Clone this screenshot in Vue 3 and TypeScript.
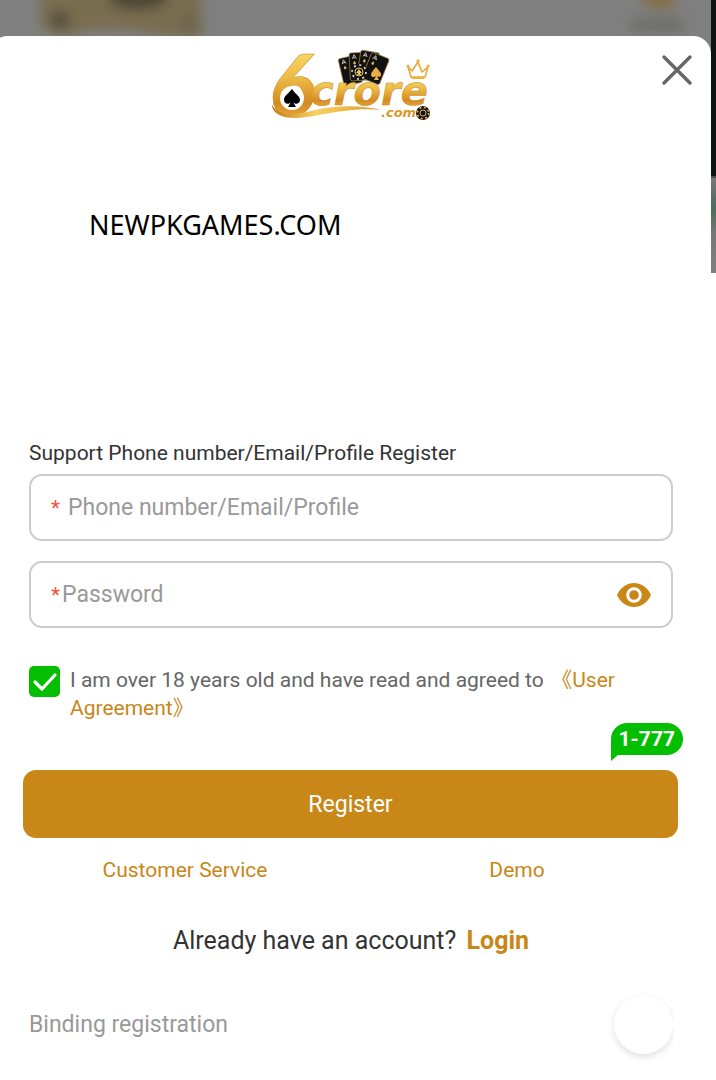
<script setup lang="ts">
import { ref } from 'vue'

const account = ref('')
const password = ref('')
const showPassword = ref(false)
const agreed = ref(true)
const cards = [
  { x: 69, y: 14, tilt: -13 },
  { x: 80, y: 8, tilt: -3 },
  { x: 92, y: 5, tilt: 9 },
  { x: 103, y: 7, tilt: 22 },
]
</script>

<template>
  <div class="page">
    <div class="backdrop" aria-hidden="true">
      <svg class="backdrop-art" width="260" height="36" viewBox="0 0 260 36">
        <defs>
          <filter id="soft" x="-30%" y="-60%" width="160%" height="220%"><feGaussianBlur stdDeviation="6" /></filter>
        </defs>
        <g filter="url(#soft)">
          <path d="M40 -10H202V38H172L130 30 90 30 60 38 40 26Z" fill="#796d50" />
          <circle cx="60" cy="20" r="10" fill="#565040" />
          <ellipse cx="138" cy="-2" rx="30" ry="12" fill="#4e4634" />
          <circle cx="190" cy="24" r="10" fill="#6d654f" />
        </g>
      </svg>
      <svg class="backdrop-art" width="110" height="36" viewBox="0 0 110 36">
        <g filter="url(#soft)">
          <ellipse cx="58" cy="0" rx="18" ry="10" fill="#84704a" />
          <rect x="28" y="18" width="56" height="14" rx="7" fill="#6d6d6b" />
        </g>
      </svg>
      <div class="edge"></div>
    </div>

    <main class="sheet">
      <header class="top">
        <svg class="logo" width="164" height="80" viewBox="0 0 164 80" role="img" aria-label="6crore.com">
          <defs>
            <linearGradient id="gold" x1="0" y1="0" x2="0" y2="1">
              <stop offset="0" stop-color="#ffed80" />
              <stop offset="0.45" stop-color="#edbb45" />
              <stop offset="0.7" stop-color="#d38b20" />
              <stop offset="1" stop-color="#f7c65a" />
            </linearGradient>
            <linearGradient id="tail" x1="0" y1="0" x2="1" y2="0">
              <stop offset="0" stop-color="#c87a18" />
              <stop offset="0.4" stop-color="#f7d264" />
              <stop offset="1" stop-color="#dc9b2b" />
            </linearGradient>
          </defs>
          <g v-for="card in cards" :key="card.x" :transform="`translate(${card.x} ${card.y}) rotate(${card.tilt})`">
            <rect width="19" height="28" rx="2" fill="#111" stroke="#aa8950" stroke-width="0.7" />
            <path d="M3 6 5 2 7 6M4 5H6" fill="none" stroke="#e8e2d0" stroke-width="0.8" />
            <path d="m5 8 1.5 2.5L5 12 3.500 10.500Z" fill="#e9b755" />
          </g>
          <path d="M107 22C104 26 102 27 102 30 102 32 105 33 107 31L105 35H110L108 31C110 33 113 31 112 29 112 27 109 25 107 22Z" fill="#edae45" />
          <g fill="url(#gold)" stroke="#c98722" stroke-width="0.5">
            <text x="0" y="71" class="six">6</text>
            <text x="41" y="60" class="crore">crore</text>
          </g>
          <path d="M3 60C10 72 28 70 46 65 70 60 92 60 112 65 92 63 72 66 50 70 30 74 8 76 3 62Z" fill="url(#tail)" />
          <circle cx="23" cy="53" r="12" fill="#fff" />
          <path d="M23 44C18 50 15 51 15 55 15 59 20 60 22 57L19 62H27L24 57C26 60 31 59 31 55 31 51 27 50 23 44Z" fill="#000" />
          <g>
            <circle cx="90" cy="27" r="8" fill="#151515" />
            <circle cx="90" cy="27" r="7" fill="none" stroke="#f0ead8" stroke-width="1.600" stroke-dasharray="2 3.5" />
            <circle cx="90" cy="27" r="4" fill="#111" stroke="#efc569" />
            <path d="M90 24 93 28H91L92 30H88L89 28H87Z" fill="#efc569" />
          </g>
          <g fill="#f0b13f">
            <path d="m139 22 4 4 6-9 4 10 6-5-3 10H142Z" fill="none" stroke="#e9a936" stroke-width="1.600" />
            <circle cx="139" cy="21" r="1.5" /><circle cx="149" cy="16" r="1.700" /><circle cx="159" cy="21" r="1.5" />
            <path d="M142 32H156L155 34H143Z" />
          </g>
          <text x="112" y="72" class="domain">.com</text>
          <circle cx="154" cy="68" r="7" fill="#17130d" />
          <circle cx="154" cy="68" r="5.700" fill="none" stroke="#e5a93b" stroke-width="1.800" stroke-dasharray="2 2.5" />
          <circle cx="154" cy="68" r="3" fill="#111" stroke="#ffe09a" stroke-width="0.8" />
        </svg>
        <button class="close" type="button" aria-label="Close">
          <svg width="32" height="32" viewBox="0 0 32 32"><path d="M3 3 29 29M29 3 3 29" stroke="#666" stroke-width="3.400" stroke-linecap="round" /></svg>
        </button>
      </header>

      <p class="site">NEWPKGAMES.COM</p>

      <form class="form" @submit.prevent>
        <label class="hint" for="account">Support Phone number/Email/Profile Register</label>
        <div class="field spaced">
          <span class="star" aria-hidden="true">*</span>
          <input id="account" v-model="account" type="text" placeholder="Phone number/Email/Profile" />
        </div>
        <div class="field">
          <span class="star" aria-hidden="true">*</span>
          <input v-model="password" :type="showPassword ? 'text' : 'password'" placeholder="Password" aria-label="Password" />
          <button class="eye" type="button" aria-label="Show password" @click="showPassword = !showPassword">
            <svg width="34" height="24" viewBox="0 0 34 24">
              <path d="M0 12C7-4 27-4 34 12 27 28 7 28 0 12Z" fill="#c88717" />
              <circle cx="17" cy="12" r="6.3" fill="#c88717" stroke="#fff" stroke-width="3" />
            </svg>
          </button>
        </div>

        <div class="agree">
          <input id="agree" v-model="agreed" type="checkbox" />
          <svg class="tick" width="31" height="31" viewBox="0 0 31 31" aria-hidden="true">
            <path v-if="agreed" d="M6 16 13 23 26 9" fill="none" stroke="#fff" stroke-width="3.2" stroke-linecap="round" stroke-linejoin="round" />
          </svg>
          <div class="terms">
            <label for="agree">I am over 18 years old and have read and agreed to</label>&nbsp;
            <a href="#agreement"><span class="bracket open">《</span>User Agreement<span class="bracket">》</span></a>
          </div>
        </div>

        <div class="submit">
          <span class="badge">1-777<svg class="point" width="10" height="20" viewBox="0 0 10 20" aria-hidden="true"><path d="M0 0V20L8 13H10Z" fill="#04be02" /></svg></span>
          <button class="register" type="submit">Register</button>
        </div>
      </form>

      <nav class="links">
        <a href="#service">Customer Service</a>
        <a href="#demo">Demo</a>
      </nav>
      <p class="account">Already have an account? <a href="#login">Login</a></p>
      <footer class="binding">
        <span>Binding registration</span>
        <div class="clip"><div class="bubble"></div></div>
      </footer>
    </main>
  </div>
</template>

<style>
body { background: #fff; }
</style>

<style scoped>
* { box-sizing: border-box; }
.page {
  position: relative;
  overflow: hidden;
  padding: 36px 5px 0 0;
  font-family: Roboto, "Noto Sans CJK SC", sans-serif;
  color: #333;
}
.backdrop {
  position: absolute;
  inset: 0 0 auto;
  height: 273px;
  background: #808080;
  display: flex;
  justify-content: space-between;
  padding-right: 5px;
}
.edge {
  position: absolute;
  top: 0;
  right: 0;
  width: 5px;
  height: 273px;
  background: linear-gradient(#101314 0 176px, #4b4b4b 176px 178px, #777 178px, #4c6b5e 208px, #777 234px, #808080);
}
.sheet {
  position: relative;
  margin-left: -10px;
  padding: 0 38px 20px 39px;
  border-radius: 18px;
  background: #fff;
}
.top { display: flex; justify-content: center; padding-top: 9px; }
.logo { display: block; overflow: visible; }
.six { font: italic 900 86px Lato, sans-serif; }
.crore { font: italic bold 40px "DejaVu Sans", sans-serif; }
.domain { font: italic bold 13px "DejaVu Sans", sans-serif; fill: #d99a2b; }
.close {
  position: absolute;
  top: 18px;
  right: 18px;
  padding: 0;
  border: 0;
  background: none;
}
.close svg, .eye svg { display: block; }
button { font-family: inherit; cursor: pointer; }
a { color: #c88717; text-decoration: none; }
.site {
  margin: 82px 0 196px 60px;
  font: 27px/36px "Noto Sans", sans-serif;
  color: #000;
}
.hint { display: block; font-size: 21px; line-height: 28px; margin-bottom: 7px; }
.field {
  display: flex;
  align-items: center;
  height: 67px;
  padding: 0 20px;
  margin-bottom: 20px;
  border: 2px solid #ccc;
  border-radius: 13px;
}
.star { width: 11px; font-size: 21px; line-height: 28px; color: #f0543c; }
.spaced .star { width: 17px; }
.field input {
  flex: 1;
  min-width: 0;
  height: 44px;
  padding: 0;
  border: 0;
  outline: 0;
  background: none;
  font: 23px Roboto, sans-serif;
  color: #333;
}
.field input::placeholder { color: #999; opacity: 1; }
.eye { padding: 0; border: 0; background: none; }
.agree { position: relative; display: flex; gap: 10px; margin-top: 38px; }
.agree input {
  flex: none;
  appearance: none;
  width: 31px;
  height: 31px;
  margin: 0;
  border-radius: 5px;
  background: #04be02;
}
.tick { position: absolute; top: 0; left: 0; pointer-events: none; }
.terms { font-size: 21px; line-height: 28px; color: #666; width: 570px; }
.bracket { font-family: "Noto Sans CJK SC", sans-serif; line-height: 1; margin-right: -10px; }
.bracket.open { margin: 0 0 0 -3px; }
.submit { position: relative; margin: 48px -5px 0 -6px; }
.badge {
  position: absolute;
  right: -5px;
  bottom: 83px;
  padding: 0 8px;
  border-radius: 16px 16px 16px 0;
  background: #04be02;
  color: #fff;
  font-size: 21px;
  font-weight: 700;
  line-height: 32px;
}
.point { position: absolute; left: 0; top: 18px; }
.register {
  display: block;
  width: 100%;
  height: 68px;
  border: 0;
  border-radius: 13px;
  background: #c88717;
  color: #fff;
  font-size: 23px;
}
.links {
  display: grid;
  grid-template-columns: 1fr 1fr;
  margin: 18px -10px 0 -10px;
  text-align: center;
  font-size: 21px;
  line-height: 28px;
}
.account { margin: 41px 0 0; text-align: center; font-size: 25px; line-height: 32px; }
.account a { font-weight: 700; margin-left: 4px; }
.binding {
  display: flex;
  align-items: center;
  justify-content: space-between;
  margin-top: 26px;
  font-size: 23px;
  color: #999;
}
.clip { overflow: hidden; padding: 12px 0 12px 12px; }
.bubble { width: 59px; height: 59px; border-radius: 50%; background: #fff; box-shadow: 0 3px 7px rgb(0 0 0 / 12%); }
</style>
